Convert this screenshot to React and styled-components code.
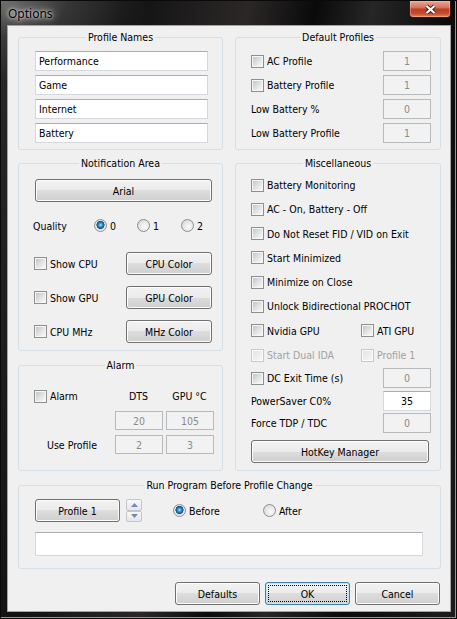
import styled, { createGlobalStyle, css } from 'styled-components'

const GlobalStyle = createGlobalStyle`
  * { box-sizing: border-box; }
  html, body { margin: 0; padding: 0; background: #000; }
  body {
    font-family: 'DejaVu Sans Condensed', 'DejaVu Sans', sans-serif;
    font-size: 10.5px;
    color: #000;
  }
`

const Window = styled.div`
  width: 457px;
  height: 619px;
  display: flex;
  flex-direction: column;
  border: 1px solid #0a0a0a;
  box-shadow: inset -1px -1px 0 #46b2d3;
  background:
    radial-gradient(ellipse 150px 80px at 0 0, #6e6e6e 0%, rgba(70, 70, 70, 0.6) 45%, rgba(0, 0, 0, 0) 100%),
    linear-gradient(100deg, #2a2a2a 0%, #111 22%, #2b2727 44%, #0a0a0a 56%, #262626 66%, #0b0b0b 80%, #1d1d1d 100%);
`

const TitleBar = styled.div`
  height: 24px;
  flex: none;
  display: flex;
  justify-content: space-between;
  align-items: flex-start;
  padding-left: 7px;
`

const Caption = styled.span`
  font-family: 'Noto Sans', 'Open Sans', sans-serif;
  font-size: 12px;
  line-height: 26px;
  color: #000;
  text-shadow: 0 0 3px #e8e8e8, 0 0 7px rgba(230, 230, 230, 0.9), 0 0 11px rgba(200, 200, 200, 0.7);
`

const CloseButton = styled.div`
  width: 42px;
  height: 17px;
  margin-right: 5px;
  display: flex;
  align-items: center;
  justify-content: center;
  border: 1px solid #3a1610;
  border-top: none;
  border-radius: 0 0 4px 4px;
  background: linear-gradient(#e9a595 0%, #d57561 40%, #bf3d22 52%, #c64c2f 78%, #e2885c 100%);
  box-shadow: inset 0 0 0 1px rgba(255, 220, 210, 0.35);
`

const Client = styled.div`
  flex: 1;
  margin: 0 5px 6px 6px;
  border: 1px solid #a3a3a3;
  background: #f0f0f0;
  padding: 11px 9px 0 10px;
  display: flex;
  flex-direction: column;
`

const TopGrid = styled.div`
  display: grid;
  grid-template-columns: 205px 206px;
  grid-template-rows: 113px 308px;
  column-gap: 12px;
  row-gap: 13px;
`

const Stack = styled.div`
  display: flex;
  flex-direction: column;
  gap: 14px;
`

const Group = styled.section`
  display: flex;
  flex-direction: column;
  border: 1px solid #d5dfe5;
  border-radius: 3px;
  ${(p) => p.$h && css`height: ${p.$h}px; flex: none;`}
  ${(p) => p.$grow && css`flex: 1;`}
  ${(p) => p.$mt && css`margin-top: ${p.$mt}px;`}
`

const Legend = styled.h3`
  margin: -7px 0 0;
  align-self: center;
  padding: 0 2px;
  font: inherit;
  line-height: 13px;
  background: #f0f0f0;
`

const Body = styled.div`
  display: flex;
  flex-direction: column;
  gap: ${(p) => p.$gap ?? 0}px;
  padding: ${(p) => p.$pad};
`

const TextField = styled.input`
  display: block;
  width: 100%;
  height: ${(p) => p.$h ?? 20}px;
  margin: 0;
  padding: 0 3px;
  font: inherit;
  color: #000;
  background: #fff;
  border: 1px solid #d5d8de;
  border-top-color: #abadb3;
  outline: none;
`

const NumberField = styled(TextField)`
  flex: none;
  width: 48px;
  padding: 0;
  text-align: center;
  ${(p) => p.$off && css`
    background: #f2f2f2;
    color: #8a8a8a;
    border-color: #b7babd;
  `}
`

const Row = styled.div`
  display: flex;
  align-items: center;
  justify-content: space-between;
  height: ${(p) => p.$h ?? 20}px;
  flex: none;
  ${(p) => p.$mt && css`margin-top: ${p.$mt}px;`}
`

const Box = styled.span`
  flex: none;
  width: 13px;
  height: 13px;
  padding: 1px;
  border: 1px solid ${(p) => (p.$off ? '#c9c9c9' : '#8e8f8f')};
  background: ${(p) =>
    p.$off
      ? 'linear-gradient(135deg, #e4e4e4, #f6f6f6) content-box, #fbfbfb'
      : 'linear-gradient(135deg, #c3c6cb, #e9e9e9 65%, #f7f7f7) content-box, #f6f6f6'};
`

const CheckLabel = styled.label`
  display: flex;
  align-items: center;
  gap: 3px;
  white-space: nowrap;
  color: ${(p) => (p.$off ? '#a2a2a2' : '#000')};
`

const Check = ({ children, off }) => (
  <CheckLabel $off={off}>
    <Box $off={off} />
    {children}
  </CheckLabel>
)

const RadioDot = styled.span`
  flex: none;
  width: 13px;
  height: 13px;
  border-radius: 50%;
  border: 1px solid #8e8f8f;
  background: ${(p) =>
    p.$on
      ? 'radial-gradient(circle at 50% 45%, #b4ecff 0, #3ba2e2 1.5px, #16609f 3.2px, #1d4a76 3.8px, #e2e2e2 4.3px, #f8f8f8 100%)'
      : 'radial-gradient(circle at 62% 62%, #fbfbfb 0, #e9e9e9 45%, #cdced0 100%)'};
`

const RadioLabel = styled.label`
  display: flex;
  align-items: center;
  gap: 3px;
  width: ${(p) => p.$w}px;
  flex: none;
  ${(p) => p.$ml && css`margin-left: ${p.$ml}px;`}
`

const Radio = ({ children, on, w, ml }) => (
  <RadioLabel $w={w} $ml={ml}>
    <RadioDot $on={on} />
    {children}
  </RadioLabel>
)

const Button = styled.button`
  flex: none;
  width: ${(p) => p.$w}px;
  height: ${(p) => p.$h ?? 23}px;
  margin: ${(p) => p.$mt ?? 0}px 0 0 ${(p) => p.$ml ?? 0}px;
  padding: 0;
  font: inherit;
  color: #000;
  border: 1px solid #707070;
  border-radius: 3px;
  background: linear-gradient(#f2f2f2 0%, #ebebeb 50%, #dddddd 50%, #cfcfcf 100%);
  box-shadow: inset 0 0 0 1px #fcfcfc;
  ${(p) =>
    p.$default &&
    css`
      border-color: #3c7fb1;
      box-shadow: inset 0 0 0 1px #c4e5f6;
      outline: 1px dotted #000;
      outline-offset: -4px;
    `}
`

const Spin = styled.div`
  display: flex;
  flex-direction: column;
  width: 16px;
  height: 23px;
  margin-left: 6px;
  flex: none;
`

const SpinHalf = styled.div`
  flex: 1;
  display: flex;
  align-items: center;
  justify-content: center;
  border: 1px solid #c2c7cf;
  border-radius: 2px;
  background: linear-gradient(#f8f8f8, #e6e6e6);
`

const Arrow = ({ up }) => (
  <svg width="7" height="4" viewBox="0 0 7 4">
    <path d={up ? 'M0 4 L3.5 0 L7 4 Z' : 'M0 0 L7 0 L3.5 4 Z'} fill="#6a8dbd" />
  </svg>
)

const QualityRow = styled.div`
  display: flex;
  align-items: center;
  height: 13px;
  margin: 17px 0 0 -1px;
`

const QualityLabel = styled.span`
  width: 61px;
  flex: none;
`

const AlarmGrid = styled.div`
  display: grid;
  grid-template-columns: 77px 47px 47px;
  grid-template-rows: 16px 19px 19px;
  column-gap: 4px;
  row-gap: 5px;
  margin-top: 18px;
`

const HeadCell = styled.span`
  align-self: start;
  line-height: 13px;
  ${(p) => p.$center && css`text-align: center;`}
`

const UseProfile = styled.span`
  grid-column: 1;
  align-self: center;
  padding-left: 13px;
`

const CheckList = styled.div`
  display: flex;
  flex-direction: column;
  gap: 4.3px;
`

const CheckPair = styled.div`
  display: grid;
  grid-template-columns: 110px 1fr;
  align-items: center;
  height: 20px;
`

const ButtonBar = styled.div`
  display: flex;
  justify-content: flex-end;
  gap: 5px;
  margin-top: 13px;
  padding-right: 1px;
`

const ProfileRow = styled.div`
  display: flex;
  align-items: center;
  height: 23px;
`

const PathField = styled(TextField)`
  margin-top: 10px;
`

const profileNames = ['Performance', 'Game', 'Internet', 'Battery']

const miscChecks = [
  'Battery Monitoring',
  'AC - On, Battery - Off',
  'Do Not Reset FID / VID on Exit',
  'Start Minimized',
  'Minimize on Close',
  'Unlock Bidirectional PROCHOT',
]

export default function App() {
  return (
    <>
      <GlobalStyle />
      <Window>
        <TitleBar>
          <Caption>Options</Caption>
          <CloseButton>
            <svg width="13" height="11" viewBox="0 0 13 11">
              <path d="M2.5 2 L10.5 9 M10.5 2 L2.5 9" stroke="#4b1d12" strokeWidth="4" />
              <path d="M2.5 2 L10.5 9 M10.5 2 L2.5 9" stroke="#fff" strokeWidth="2.2" />
            </svg>
          </CloseButton>
        </TitleBar>

        <Client>
          <TopGrid>
            <Group>
              <Legend>Profile Names</Legend>
              <Body $pad="7px 14px 0 16px" $gap={4}>
                {profileNames.map((n) => (
                  <TextField key={n} defaultValue={n} readOnly />
                ))}
              </Body>
            </Group>

            <Group>
              <Legend>Default Profiles</Legend>
              <Body $pad="7px 9px 0 15px" $gap={4}>
                <Row>
                  <Check>AC Profile</Check>
                  <NumberField $off defaultValue="1" readOnly />
                </Row>
                <Row>
                  <Check>Battery Profile</Check>
                  <NumberField $off defaultValue="1" readOnly />
                </Row>
                <Row>
                  <span>Low Battery %</span>
                  <NumberField $off defaultValue="0" readOnly />
                </Row>
                <Row>
                  <span>Low Battery Profile</span>
                  <NumberField $off defaultValue="1" readOnly />
                </Row>
              </Body>
            </Group>

            <Stack>
              <Group $h={188}>
                <Legend>Notification Area</Legend>
                <Body $pad="9px 10px 0 15px">
                  <Button $w={177} $ml={1}>Arial</Button>
                  <QualityRow>
                    <QualityLabel>Quality</QualityLabel>
                    <Radio on w={43}>0</Radio>
                    <Radio w={44}>1</Radio>
                    <Radio w={30}>2</Radio>
                  </QualityRow>
                  <Row $h={23} $mt={20}>
                    <Check>Show CPU</Check>
                    <Button $w={86}>CPU Color</Button>
                  </Row>
                  <Row $h={23} $mt={11}>
                    <Check>Show GPU</Check>
                    <Button $w={86}>GPU Color</Button>
                  </Row>
                  <Row $h={23} $mt={11}>
                    <Check>CPU MHz</Check>
                    <Button $w={86}>MHz Color</Button>
                  </Row>
                </Body>
              </Group>

              <Group $grow>
                <Legend>Alarm</Legend>
                <Body $pad="0 9px 0 15px">
                  <AlarmGrid>
                    <HeadCell>
                      <Check>Alarm</Check>
                    </HeadCell>
                    <HeadCell $center>DTS</HeadCell>
                    <HeadCell $center>GPU °C</HeadCell>
                    <span />
                    <NumberField $off $h={19} defaultValue="20" readOnly />
                    <NumberField $off $h={19} defaultValue="105" readOnly />
                    <UseProfile>Use Profile</UseProfile>
                    <NumberField $off $h={19} defaultValue="2" readOnly />
                    <NumberField $off $h={19} defaultValue="3" readOnly />
                  </AlarmGrid>
                </Body>
              </Group>
            </Stack>

            <Group>
              <Legend>Miscellaneous</Legend>
              <Body $pad="5px 9px 0 15px">
                <CheckList>
                  {miscChecks.map((c) => (
                    <Row key={c}>
                      <Check>{c}</Check>
                    </Row>
                  ))}
                  <CheckPair>
                    <Check>Nvidia GPU</Check>
                    <Check>ATI GPU</Check>
                  </CheckPair>
                  <CheckPair>
                    <Check off>Start Dual IDA</Check>
                    <Check off>Profile 1</Check>
                  </CheckPair>
                </CheckList>
                <Row $mt={3}>
                  <Check>DC Exit Time (s)</Check>
                  <NumberField $off defaultValue="0" readOnly />
                </Row>
                <Row $mt={2.5}>
                  <span>PowerSaver C0%</span>
                  <NumberField defaultValue="35" readOnly />
                </Row>
                <Row $mt={2.5}>
                  <span>Force TDP / TDC</span>
                  <NumberField $off defaultValue="0" readOnly />
                </Row>
                <Button $w={178} $mt={7}>HotKey Manager</Button>
              </Body>
            </Group>
          </TopGrid>

          <Group $h={84} $mt={14}>
            <Legend>Run Program Before Profile Change</Legend>
            <Body $pad="7px 17px 0 16px">
              <ProfileRow>
                <Button $w={85}>Profile 1</Button>
                <Spin>
                  <SpinHalf>
                    <Arrow up />
                  </SpinHalf>
                  <SpinHalf>
                    <Arrow />
                  </SpinHalf>
                </Spin>
                <Radio on w={90} ml={31}>Before</Radio>
                <Radio w={60}>After</Radio>
              </ProfileRow>
              <PathField $h={24} defaultValue="" readOnly />
            </Body>
          </Group>

          <ButtonBar>
            <Button $w={85}>Defaults</Button>
            <Button $w={85} $default>OK</Button>
            <Button $w={85}>Cancel</Button>
          </ButtonBar>
        </Client>
      </Window>
    </>
  )
}
